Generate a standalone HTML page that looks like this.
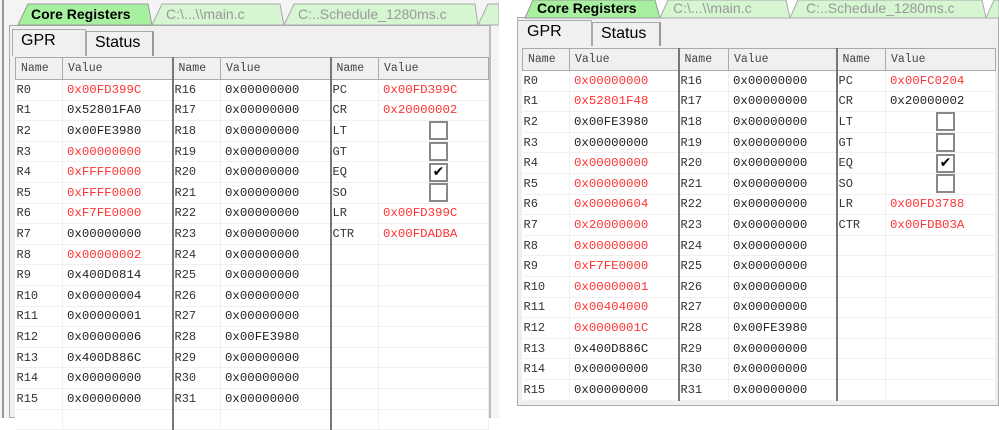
<!DOCTYPE html>
<html><head><meta charset="utf-8">
<style>
*{margin:0;padding:0;box-sizing:border-box}
body{width:999px;height:418px;background:#fff;position:relative;overflow:hidden;font-family:"Liberation Sans",sans-serif}
.abs{position:absolute}
.tabtxt{position:absolute;font-size:14px;color:#999;white-space:nowrap}
.tabtxt.act{color:#000;font-weight:bold}
.sub{position:absolute;background:#f0f0f0;border:1px solid #aaa;border-bottom:none;font-size:16px;padding-left:8px;padding-top:2px}
table{border-collapse:collapse;table-layout:fixed;position:absolute;background:#fff}
td{font-family:"Liberation Mono",monospace;font-size:12.4px;white-space:nowrap;overflow:hidden;padding-left:3px;border-right:1px solid #f0f0f0;border-bottom:1px solid #f0f0f0;color:#222}
td.n{font-size:12px;padding-left:1px;color:#333}
td.v{padding-left:4px}
td.r{color:#f33}
td.sep{border-right:2px solid #777}
tr.h td{background:#f0f0f0;border:1px solid #aaa;color:#444;font-size:11.5px;padding-left:5px}
tr.h td.sep{border-right:2px solid #777}
.cb{display:inline-block;width:19px;height:19px;border:2px solid #888;background:#fff;margin-left:46px;vertical-align:middle;text-align:center;font-size:14px;line-height:15px;color:#000;font-family:"DejaVu Sans",sans-serif}
</style></head><body>

<!-- LEFT PANEL -->
<div class="abs" style="left:0;top:0;width:499px;height:418px;background:#f4f4f4"></div>
<div class="abs" style="left:2px;top:0;width:2px;height:418px;background:#999"></div>
<div class="abs" style="left:9px;top:25px;width:482px;height:393px;background:#f0f0f0;border:1px solid #aaa;border-right:2px solid #bbb"></div>
<svg class="abs" style="left:0;top:0" width="499" height="27">
<polygon points="18,25 28,4 148,4 152,25" fill="#a6f0a0" stroke="#999"/>
<polygon points="152,25 162,4 280,4 284,25" fill="#d6f6d2" stroke="#aaa"/>
<polygon points="284,25 294,4 475,4 478,25" fill="#d6f6d2" stroke="#aaa"/>
<polygon points="478,25 488,4 499,4 499,25" fill="#d6f6d2" stroke="#aaa"/>
</svg>
<div class="tabtxt act" style="left:31px;top:6px">Core Registers</div>
<div class="tabtxt" style="left:166px;top:6px">C:\...\\main.c</div>
<div class="tabtxt" style="left:298px;top:6px">C:..Schedule_1280ms.c</div>
<div class="sub" style="left:12px;top:29px;width:74px;height:27px">GPR</div>
<div class="sub" style="left:86px;top:31px;width:68px;height:25px;border-right:2px solid #999">Status</div>

<table style="left:15px;top:57px;width:473px">
<colgroup><col style="width:47px"><col style="width:110px"><col style="width:48px"><col style="width:110px"><col style="width:48px"><col style="width:110px"></colgroup>
<tr class="h" style="height:22px"><td>Name</td><td class="sep">Value</td><td>Name</td><td class="sep">Value</td><td>Name</td><td>Value</td></tr>
<tr style="height:20.6px"><td class="n">R0</td><td class="v r sep">0x00FD399C</td><td class="n">R16</td><td class="v sep">0x00000000</td><td class="n">PC</td><td class="v r">0x00FD399C</td></tr>
<tr style="height:20.6px"><td class="n">R1</td><td class="v sep">0x52801FA0</td><td class="n">R17</td><td class="v sep">0x00000000</td><td class="n">CR</td><td class="v r">0x20000002</td></tr>
<tr style="height:20.6px"><td class="n">R2</td><td class="v sep">0x00FE3980</td><td class="n">R18</td><td class="v sep">0x00000000</td><td class="n">LT</td><td class="v"><span class="cb"></span></td></tr>
<tr style="height:20.6px"><td class="n">R3</td><td class="v r sep">0x00000000</td><td class="n">R19</td><td class="v sep">0x00000000</td><td class="n">GT</td><td class="v"><span class="cb"></span></td></tr>
<tr style="height:20.6px"><td class="n">R4</td><td class="v r sep">0xFFFF0000</td><td class="n">R20</td><td class="v sep">0x00000000</td><td class="n">EQ</td><td class="v"><span class="cb">✔</span></td></tr>
<tr style="height:20.6px"><td class="n">R5</td><td class="v r sep">0xFFFF0000</td><td class="n">R21</td><td class="v sep">0x00000000</td><td class="n">SO</td><td class="v"><span class="cb"></span></td></tr>
<tr style="height:20.6px"><td class="n">R6</td><td class="v r sep">0xF7FE0000</td><td class="n">R22</td><td class="v sep">0x00000000</td><td class="n">LR</td><td class="v r">0x00FD399C</td></tr>
<tr style="height:20.6px"><td class="n">R7</td><td class="v sep">0x00000000</td><td class="n">R23</td><td class="v sep">0x00000000</td><td class="n">CTR</td><td class="v r">0x00FDADBA</td></tr>
<tr style="height:20.6px"><td class="n">R8</td><td class="v r sep">0x00000002</td><td class="n">R24</td><td class="v sep">0x00000000</td><td class="n"></td><td></td></tr>
<tr style="height:20.6px"><td class="n">R9</td><td class="v sep">0x400D0814</td><td class="n">R25</td><td class="v sep">0x00000000</td><td class="n"></td><td></td></tr>
<tr style="height:20.6px"><td class="n">R10</td><td class="v sep">0x00000004</td><td class="n">R26</td><td class="v sep">0x00000000</td><td class="n"></td><td></td></tr>
<tr style="height:20.6px"><td class="n">R11</td><td class="v sep">0x00000001</td><td class="n">R27</td><td class="v sep">0x00000000</td><td class="n"></td><td></td></tr>
<tr style="height:20.6px"><td class="n">R12</td><td class="v sep">0x00000006</td><td class="n">R28</td><td class="v sep">0x00FE3980</td><td class="n"></td><td></td></tr>
<tr style="height:20.6px"><td class="n">R13</td><td class="v sep">0x400D886C</td><td class="n">R29</td><td class="v sep">0x00000000</td><td class="n"></td><td></td></tr>
<tr style="height:20.6px"><td class="n">R14</td><td class="v sep">0x00000000</td><td class="n">R30</td><td class="v sep">0x00000000</td><td class="n"></td><td></td></tr>
<tr style="height:20.6px"><td class="n">R15</td><td class="v sep">0x00000000</td><td class="n">R31</td><td class="v sep">0x00000000</td><td class="n"></td><td></td></tr>
<tr style="height:20.6px"><td class="n"></td><td class="sep"></td><td class="n"></td><td class="sep"></td><td></td><td></td></tr>
</table>

<!-- RIGHT PANEL -->
<div class="abs" style="left:517px;top:17px;width:482px;height:389px;background:#f0f0f0;border:1px solid #aaa"></div>
<svg class="abs" style="left:500px;top:0" width="499" height="19">
<polygon points="25,18 33,0 155,0 160,18" fill="#a6f0a0" stroke="#999"/>
<polygon points="160,18 168,0 286,0 290,18" fill="#d6f6d2" stroke="#aaa"/>
<polygon points="290,18 298,0 482,0 486,18" fill="#d6f6d2" stroke="#aaa"/>
<polygon points="486,18 494,0 499,0 499,18" fill="#d6f6d2" stroke="#aaa"/>
</svg>
<div class="tabtxt act" style="left:537px;top:0px">Core Registers</div>
<div class="tabtxt" style="left:673px;top:0px">C:\...\\main.c</div>
<div class="tabtxt" style="left:806px;top:0px">C:..Schedule_1280ms.c</div>
<div class="sub" style="left:517px;top:20px;width:75px;height:26px;padding-left:9px">GPR</div>
<div class="sub" style="left:592px;top:22px;width:69px;height:24px;border-right:2px solid #999">Status</div>

<table style="left:522px;top:48px;width:473px">
<colgroup><col style="width:47px"><col style="width:109px"><col style="width:50px"><col style="width:108px"><col style="width:49px"><col style="width:110px"></colgroup>
<tr class="h" style="height:22px"><td>Name</td><td class="sep">Value</td><td>Name</td><td class="sep">Value</td><td>Name</td><td>Value</td></tr>
<tr style="height:20.6px"><td class="n">R0</td><td class="v r sep">0x00000000</td><td class="n">R16</td><td class="v sep">0x00000000</td><td class="n">PC</td><td class="v r">0x00FC0204</td></tr>
<tr style="height:20.6px"><td class="n">R1</td><td class="v r sep">0x52801F48</td><td class="n">R17</td><td class="v sep">0x00000000</td><td class="n">CR</td><td class="v">0x20000002</td></tr>
<tr style="height:20.6px"><td class="n">R2</td><td class="v sep">0x00FE3980</td><td class="n">R18</td><td class="v sep">0x00000000</td><td class="n">LT</td><td class="v"><span class="cb"></span></td></tr>
<tr style="height:20.6px"><td class="n">R3</td><td class="v sep">0x00000000</td><td class="n">R19</td><td class="v sep">0x00000000</td><td class="n">GT</td><td class="v"><span class="cb"></span></td></tr>
<tr style="height:20.6px"><td class="n">R4</td><td class="v r sep">0x00000000</td><td class="n">R20</td><td class="v sep">0x00000000</td><td class="n">EQ</td><td class="v"><span class="cb">✔</span></td></tr>
<tr style="height:20.6px"><td class="n">R5</td><td class="v r sep">0x00000000</td><td class="n">R21</td><td class="v sep">0x00000000</td><td class="n">SO</td><td class="v"><span class="cb"></span></td></tr>
<tr style="height:20.6px"><td class="n">R6</td><td class="v r sep">0x00000604</td><td class="n">R22</td><td class="v sep">0x00000000</td><td class="n">LR</td><td class="v r">0x00FD3788</td></tr>
<tr style="height:20.6px"><td class="n">R7</td><td class="v r sep">0x20000000</td><td class="n">R23</td><td class="v sep">0x00000000</td><td class="n">CTR</td><td class="v r">0x00FDB03A</td></tr>
<tr style="height:20.6px"><td class="n">R8</td><td class="v r sep">0x00000000</td><td class="n">R24</td><td class="v sep">0x00000000</td><td class="n"></td><td></td></tr>
<tr style="height:20.6px"><td class="n">R9</td><td class="v r sep">0xF7FE0000</td><td class="n">R25</td><td class="v sep">0x00000000</td><td class="n"></td><td></td></tr>
<tr style="height:20.6px"><td class="n">R10</td><td class="v r sep">0x00000001</td><td class="n">R26</td><td class="v sep">0x00000000</td><td class="n"></td><td></td></tr>
<tr style="height:20.6px"><td class="n">R11</td><td class="v r sep">0x00404000</td><td class="n">R27</td><td class="v sep">0x00000000</td><td class="n"></td><td></td></tr>
<tr style="height:20.6px"><td class="n">R12</td><td class="v r sep">0x0000001C</td><td class="n">R28</td><td class="v sep">0x00FE3980</td><td class="n"></td><td></td></tr>
<tr style="height:20.6px"><td class="n">R13</td><td class="v sep">0x400D886C</td><td class="n">R29</td><td class="v sep">0x00000000</td><td class="n"></td><td></td></tr>
<tr style="height:20.6px"><td class="n">R14</td><td class="v sep">0x00000000</td><td class="n">R30</td><td class="v sep">0x00000000</td><td class="n"></td><td></td></tr>
<tr style="height:20.6px"><td class="n">R15</td><td class="v sep">0x00000000</td><td class="n">R31</td><td class="v sep">0x00000000</td><td class="n"></td><td></td></tr>
</table>
</body></html>
